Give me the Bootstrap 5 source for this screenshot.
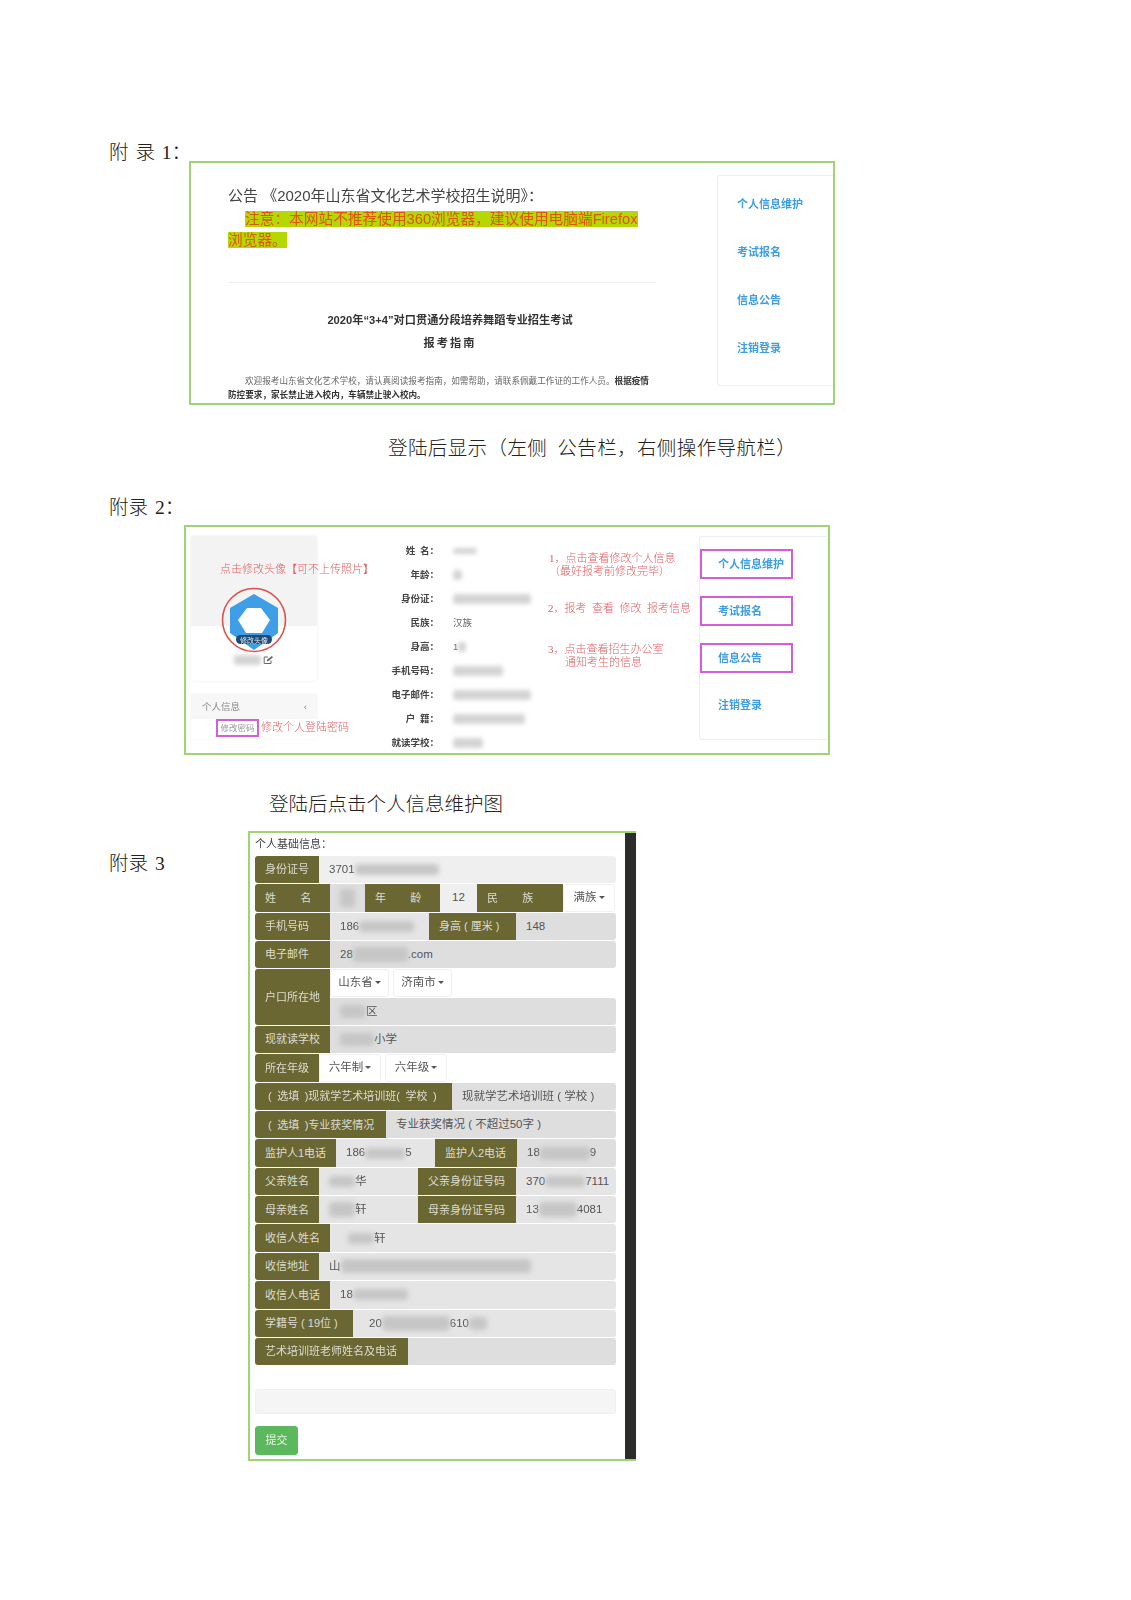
<!DOCTYPE html>
<html lang="zh">
<head>
<meta charset="utf-8">
<title>附录</title>
<link href="https://cdn.jsdelivr.net/npm/bootstrap@5.3.0/dist/css/bootstrap.min.css" rel="stylesheet">
<style>
body{background:#fff;font-family:"Liberation Sans","Noto Sans CJK SC",sans-serif;color:#333}
.doc{width:1131px;height:1600px;overflow:hidden;padding-top:141px}
.serif{font-family:"Liberation Serif","Noto Sans CJK SC",serif;font-weight:300;color:#222}
.apx{font-size:19.5px;line-height:24px;word-spacing:2px;white-space:nowrap}
.cap{font-size:19.5px;line-height:26px;white-space:nowrap}
.shot{border:2px solid #9fd374;background:#fff;filter:blur(.35px);flex:none}
.s1{width:646px;height:244px;margin:20px 0 0 0}
.s1wrap{padding-left:109px}
.s1lab{width:80px}
.s1l{width:526px;padding:21px 0 0 37px}
.s1h{font-size:15px;line-height:24px;color:#444;margin-bottom:1px}
.s1n{font-size:14.7px;line-height:21px;color:#e2540c;width:428px;text-indent:17px;margin:0;white-space:nowrap}
.s1n span{background:#b4d800}
.s1n-next{text-indent:0}
.s1line{width:428px;border-top:1px solid #eee;margin:31px 0 26px}
.s1t{width:428px;padding-left:16px;text-align:center;font-weight:700;font-size:11.2px;line-height:23px;color:#333;margin:0}
.s1t2{letter-spacing:2px}
.s1p{width:428px;font-size:8.6px;line-height:14px;text-indent:17px;color:#666;margin:19px 0 0;white-space:nowrap}
.s1p b{color:#333}
.s1p2{text-indent:0;margin-top:0}
.sidecard{border:1px solid #eee;border-right:0;border-radius:3px 0 0 3px}
.s1side{width:116px;height:211px;margin-top:12px;padding:16px 0 0 19px}
.nv{display:block;color:#3f9ee0;font-weight:700;font-size:11px;line-height:24px;height:48px;white-space:nowrap;text-decoration:none}
.cap1{margin:31px 0 0 388px;letter-spacing:.4px}
.apx2{margin:34px 0 0 109px;height:16px}
.s2{width:646px;height:230px;margin:13px 0 0 184px}
.pcol{width:126px;margin:9px 0 0 5px;flex:none}
.pcard{height:145px;border-radius:3px;box-shadow:0 0 2px #e3e3e3;background:linear-gradient(#f3f3f3 90px,#fff 90px);padding-top:27px}
.red{color:#e15f5f;white-space:nowrap;font-size:11px;line-height:13px}
.pcard .red{margin-left:29px;width:126px}
.avt{display:block;margin:11px auto 0}
.uname{font-size:9px;line-height:14px;margin-top:-1px}
.smudge{display:inline-block;background:#d4d4d4;border-radius:3px;filter:blur(2px);height:10px;vertical-align:middle}
.picard{margin-top:13px;height:45px;box-shadow:0 0 2px #eee;font-size:9.5px;color:#888}
.pihead{height:25px;background:#f7f7f7;padding:0 10px 0 11px;line-height:25px}
.pibox{border:2px solid #d25fd8;height:18px;width:43px;margin-left:25px;font-size:8.5px;line-height:14px;text-align:center;flex:none;color:#999}
.picard .red{margin-left:2px;line-height:16px}
.dcol{width:122px;margin:12px 0 0 1px;flex:none}
.dcolv{width:106px;margin:12px 0 0 0;flex:none}
.dl{font-size:9.5px;font-weight:700;color:#444;line-height:24px;height:24px;text-align:right;padding-right:1px;white-space:nowrap}
.dv{font-size:9.5px;color:#666;line-height:24px;height:24px;padding-left:13px;white-space:nowrap;width:106px}
.acol{width:153px;margin:25px 0 0 0;flex:none}
.acol .red{line-height:13px}
.a1{margin-left:3px}
.a2{margin-top:24px;margin-left:2px}
.a3{margin-top:28px;margin-left:2px}
.ind{padding-left:17px}
.s2nav{width:128px;height:204px;margin-top:9px;flex:none;padding:12px 0 0 0}
.ni{display:flex;align-items:center;padding-left:16px;height:30px;margin-bottom:17px;color:#3f9ee0;font-weight:700;font-size:11px;width:93px;border:2px solid transparent;white-space:nowrap}
.ni.pk{border-color:#d25fd8}
.cap2{margin:37px 0 0 269px}
.s3wrap{margin-top:13px;padding-left:109px}
.s3lab{width:139px;margin-top:21px;flex:none}
.s3{width:388px;height:630px;border:2px solid #9fd374;border-right:0;overflow:hidden;filter:blur(.3px);flex:none}
.s3main{width:375px;padding:0 9px 0 5px;font-size:11.5px;color:#555}
.strip{width:11px;background:#2c2c2a}
.s3t{line-height:23px;font-size:11px;color:#444}
.fr{height:28.35px;padding-bottom:1px;font-size:11.5px}
.lb{background:#6b6733;color:#dcdcd0;display:flex;align-items:center;padding-left:10px;white-space:pre;flex:none;height:100%;font-size:11px}
.lb:first-child{border-radius:3px 0 0 3px}
.vl{background:#dedede;display:flex;align-items:center;padding-left:10px;white-space:pre;overflow:hidden;height:100%}
.vl.grow{flex:1 1 auto;border-radius:0 3px 3px 0}
.lt{background:#e5e5e5}
.lt1{background:#efefef}
.ctr{justify-content:center;padding-left:0}
.w64{width:64px}.w75{width:75px}.w86{width:86px}.w87{width:87px}.w81{width:81px}.w82{width:82px}.w98{width:98px}.w197{width:197px;padding-left:13px}.w131{width:131px;padding-left:13px}.w153{width:153px}
.v35{width:35px}.v37{width:37px}.v99{width:99px}
.ddb{background:#fff;border:1px solid #f0f0f0;border-radius:3px;color:#555;font-size:11.5px;padding:0;height:100%;width:59px;--bs-btn-hover-bg:#fff}
.ddb.dropdown-toggle::after{margin-left:2px;border-top-width:3px;border-right-width:3px;border-left-width:3px;vertical-align:2px}
.w52{width:52px}.w62{width:62px}
.tall{height:56.7px}
.tall .lb{height:calc(100% - 1px)}
.sub{height:28.35px;padding-bottom:1px}
.blank{height:25px;background:#f5f5f5;border-radius:3px;margin-top:23px;border:1px solid #f0f0f0}
.sub-btn{--bs-btn-bg:#5cb85c;--bs-btn-border-color:#5cb85c;--bs-btn-color:#e8f5e8;font-size:11px;width:43px;height:29px;padding:0;margin-top:12px;border-radius:3px}
.smg{background:#c6c6c6;height:11px;filter:blur(2.5px);display:inline-block;border-radius:4px}
.rr{border-radius:0 3px 3px 0}
</style>
</head>
<body>
<main class="doc">
  <section class="d-flex s1wrap">
    <div class="s1lab apx serif">附 录 1&#xFF1A;</div>
    <div class="shot s1 d-flex">
      <div class="s1l">
        <p class="s1h">公告 《2020年山东省文化艺术学校招生说明》&#xFF1A;</p>
        <p class="s1n"><span>注意&#xFF1A;本网站不推荐使用360浏览器&#xFF0C;建议使用电脑端Firefox</span></p>
        <p class="s1n s1n-next"><span>浏览器。</span></p>
        <div class="s1line"></div>
        <p class="s1t">2020年“3+4”对口贯通分段培养舞蹈专业招生考试</p>
        <p class="s1t s1t2">报考指南</p>
        <p class="s1p">欢迎报考山东省文化艺术学校&#xFF0C;请认真阅读报考指南&#xFF0C;如需帮助&#xFF0C;请联系佩戴工作证的工作人员。<b>根据疫情</b></p>
        <p class="s1p s1p2"><b>防控要求&#xFF0C;家长禁止进入校内&#xFF0C;车辆禁止驶入校内。</b></p>
      </div>
      <nav class="sidecard s1side">
        <a class="nv" href="#">个人信息维护</a>
        <a class="nv" href="#">考试报名</a>
        <a class="nv" href="#">信息公告</a>
        <a class="nv" href="#">注销登录</a>
      </nav>
    </div>
  </section>
  <div class="cap serif cap1">登陆后显示&#xFF08;左侧&ensp;公告栏&#xFF0C;右侧操作导航栏&#xFF09;</div>

  <div class="apx serif apx2">附录 2&#xFF1A;</div>
  <section class="shot s2 d-flex">
    <div class="pcol">
      <div class="pcard text-center">
        <div class="red serif text-start">点击修改头像【可不上传照片】</div>
        <svg class="avt" width="66" height="66" viewBox="0 0 66 66" role="img" aria-label="头像">
          <path d="M33 7 L57 21 V46 L33 63 L9 46 V21 Z" fill="#3e9fe8"/>
          <path d="M26 21 H40 L49 33 L41 46 H25 L17 33 Z" fill="#fff"/>
          <circle cx="33" cy="33" r="31.5" fill="none" stroke="#d9534f" stroke-width="1.6"/>
          <rect x="15" y="48" width="36" height="9" rx="4.5" fill="#1f4a75"/>
          <text x="33" y="55.5" text-anchor="middle" font-size="7" fill="#dfe8f0">修改头像</text>
        </svg>
        <div class="uname"><span class="smudge" style="width:27px"></span>
          <svg width="11" height="10" viewBox="0 0 11 10" aria-hidden="true"><path d="M8 5.5V8.5H1.2V2H5" fill="none" stroke="#666" stroke-width="1"/><path d="M3.8 6.4L4.2 4.6L8.8.9L10 2.2L5.5 6Z" fill="#666"/></svg>
        </div>
      </div>
      <div class="picard">
        <div class="pihead d-flex justify-content-between"><span>个人信息</span><span>‹</span></div>
        <div class="d-flex">
          <div class="pibox">修改密码</div>
          <div class="red serif">修改个人登陆密码</div>
        </div>
      </div>
    </div>
    <div class="dcol">
      <div class="dl">姓&ensp;名&#xFF1A;</div><div class="dl">年龄&#xFF1A;</div><div class="dl">身份证&#xFF1A;</div><div class="dl">民族&#xFF1A;</div><div class="dl">身高&#xFF1A;</div><div class="dl">手机号码&#xFF1A;</div><div class="dl">电子邮件&#xFF1A;</div><div class="dl">户&ensp;籍&#xFF1A;</div><div class="dl">就读学校&#xFF1A;</div>
    </div>
    <div class="dcolv">
      <div class="dv"><span class="smudge" style="width:24px;height:6px"></span></div>
      <div class="dv"><span class="smudge" style="width:9px"></span></div>
      <div class="dv"><span class="smudge" style="width:78px"></span></div>
      <div class="dv">汉族</div>
      <div class="dv">1<span class="smudge" style="width:8px"></span></div>
      <div class="dv"><span class="smudge" style="width:50px"></span></div>
      <div class="dv"><span class="smudge" style="width:78px"></span></div>
      <div class="dv"><span class="smudge" style="width:72px"></span></div>
      <div class="dv"><span class="smudge" style="width:30px"></span></div>
    </div>
    <div class="acol">
      <div class="red serif a1">1&#xFF0C;点击查看修改个人信息<br>&#xFF08;最好报考前修改完毕&#xFF09;</div>
      <div class="red serif a2">2&#xFF0C;报考&ensp;查看&ensp;修改&ensp;报考信息</div>
      <div class="red serif a3">3&#xFF0C;点击查看招生办公室<br><span class="ind">通知考生的信息</span></div>
    </div>
    <nav class="sidecard s2nav">
      <div class="ni pk">个人信息维护</div>
      <div class="ni pk">考试报名</div>
      <div class="ni pk">信息公告</div>
      <div class="ni">注销登录</div>
    </nav>
  </section>
  <div class="cap serif cap2">登陆后点击个人信息维护图</div>

  <section class="d-flex s3wrap">
    <div class="s3lab apx serif">附录 3</div>
    <div class="s3 d-flex">
      <div class="s3main flex-none">
        <div class="s3t">个人基础信息&#xFF1A;</div>
        <div class="fr d-flex"><div class="lb w64">身份证号</div><div class="vl lt1 grow">3701<span class="smg" style="width:84px"></span></div></div>
        <div class="fr d-flex"><div class="lb w75">姓&emsp;&emsp;&thinsp;名</div><div class="vl v35"><span class="smg" style="width:15px;height:18px"></span></div><div class="lb w75">年&emsp;&emsp;&thinsp;龄</div><div class="vl lt1 v37 ctr">12</div><div class="lb w86">民&emsp;&emsp;&thinsp;族</div><button class="btn ddb dropdown-toggle w52" type="button">满族</button></div>
        <div class="fr d-flex"><div class="lb w75">手机号码</div><div class="vl lt v99">186<span class="smg" style="width:55px"></span></div><div class="lb w87">身高 ( 厘米 )</div><div class="vl grow">148</div></div>
        <div class="fr d-flex"><div class="lb w75">电子邮件</div><div class="vl grow">28<span class="smg" style="width:55px;height:15px"></span>.com</div></div>
        <div class="tall d-flex">
          <div class="lb w75">户口所在地</div>
          <div class="flex-grow-1">
            <div class="sub d-flex gap-1"><button class="btn ddb dropdown-toggle" type="button">山东省</button><button class="btn ddb dropdown-toggle" type="button">济南市</button></div>
            <div class="sub"><div class="vl rr"><span class="smg" style="width:26px;height:13px"></span>区</div></div>
          </div>
        </div>
        <div class="fr d-flex"><div class="lb w75">现就读学校</div><div class="vl grow"><span class="smg" style="width:34px;height:13px"></span>小学</div></div>
        <div class="fr d-flex"><div class="lb w64">所在年级</div><button class="btn ddb dropdown-toggle w62 me-1" type="button">六年制</button><button class="btn ddb dropdown-toggle w62" type="button">六年级</button></div>
        <div class="fr d-flex"><div class="lb w197">(&ensp;选填&ensp;)现就学艺术培训班(&ensp;学校&ensp;)</div><div class="vl grow">现就学艺术培训班 ( 学校 )</div></div>
        <div class="fr d-flex"><div class="lb w131">(&ensp;选填&ensp;)专业获奖情况</div><div class="vl grow">专业获奖情况 ( 不超过50字 )</div></div>
        <div class="fr d-flex"><div class="lb w81">监护人1电话</div><div class="vl lt v99">186<span class="smg" style="width:40px"></span>5</div><div class="lb w82">监护人2电话</div><div class="vl grow">18<span class="smg" style="width:50px;height:13px"></span>9</div></div>
        <div class="fr d-flex"><div class="lb w64">父亲姓名</div><div class="vl lt v99"><span class="smg" style="width:26px"></span>华</div><div class="lb w98">父亲身份证号码</div><div class="vl lt grow">370<span class="smg" style="width:40px"></span>7111</div></div>
        <div class="fr d-flex"><div class="lb w64">母亲姓名</div><div class="vl lt v99"><span class="smg" style="width:26px;height:15px"></span>轩</div><div class="lb w98">母亲身份证号码</div><div class="vl lt grow">13<span class="smg" style="width:38px;height:15px"></span>4081</div></div>
        <div class="fr d-flex"><div class="lb w75">收信人姓名</div><div class="vl lt grow"><span class="smg ms-2" style="width:26px"></span>轩</div></div>
        <div class="fr d-flex"><div class="lb w64">收信地址</div><div class="vl lt grow">山<span class="smg" style="width:190px;height:14px"></span></div></div>
        <div class="fr d-flex"><div class="lb w75">收信人电话</div><div class="vl lt grow">18<span class="smg" style="width:55px"></span></div></div>
        <div class="fr d-flex"><div class="lb w98">学籍号 ( 19位 )</div><div class="vl lt grow ps-3">20<span class="smg" style="width:68px;height:15px"></span>610<span class="smg" style="width:18px;height:13px"></span></div></div>
        <div class="fr d-flex"><div class="lb w153">艺术培训班老师姓名及电话</div><div class="vl grow"></div></div>
        <div class="blank"></div>
        <button class="btn sub-btn" type="button">提交</button>
      </div>
      <div class="strip"></div>
    </div>
  </section>
</main>
<script src="https://cdn.jsdelivr.net/npm/bootstrap@5.3.0/dist/js/bootstrap.bundle.min.js"></script>
</body>
</html>
